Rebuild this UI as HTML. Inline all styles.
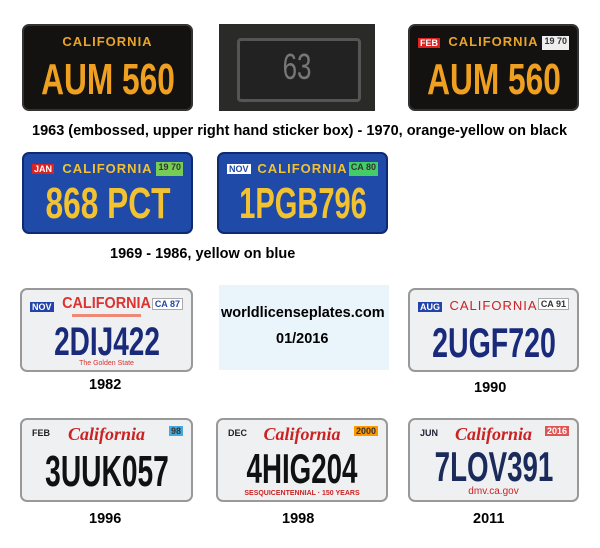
<!DOCTYPE html>
<html><head><meta charset="utf-8"><style>
body{margin:0;width:600px;height:548px;background:#fff;position:relative;font-family:"Liberation Sans",sans-serif;overflow:hidden}
.p{position:absolute;border-radius:7px;box-sizing:border-box;overflow:hidden}
.blk{background:#141210;border:2px solid #333}
.blu{background:#1f4aa8;border:2px solid #0e2a70}
.wht{background:#eef0f2;border:2px solid #999}
.t{position:absolute;left:0;right:0;text-align:center;font-weight:bold;white-space:nowrap}
.n{position:absolute;left:50%;white-space:nowrap;transform:translateX(-50%) scaleX(.72);font-family:"Liberation Sans",sans-serif;line-height:1;font-weight:bold}
.c{position:absolute;font-weight:bold;font-size:14.5px;color:#000;white-space:nowrap}
.tag{position:absolute;font-size:9px;font-weight:bold;padding:0 2px;white-space:nowrap}
</style></head><body>
<div class="p blk" style="left:22px;top:24px;width:171px;height:87px">
 <div class="t" style="top:8px;font-size:13px;color:#e8a52a;letter-spacing:1px">CALIFORNIA</div>
 <div class="n" style="top:32px;font-size:44px;color:#f0a020">AUM 560</div>
</div>
<div class="p" style="left:219px;top:24px;width:156px;height:87px;background:#2a2a28;border-radius:0">
 <div style="position:absolute;left:18px;top:14px;width:118px;height:58px;border:3px solid #555;border-radius:4px;background:#222"></div>
 <div class="n" style="top:25px;font-size:36px;color:#777;font-weight:normal">63</div>
</div>
<div class="p blk" style="left:408px;top:24px;width:171px;height:87px">
 <div class="tag" style="left:8px;top:12px;background:#d22;color:#fff">FEB</div>
 <div class="t" style="top:8px;font-size:13px;color:#e8a52a;letter-spacing:1px">CALIFORNIA</div>
 <div class="tag" style="right:8px;top:10px;background:#eee;color:#333;height:14px">19 70</div>
 <div class="n" style="top:32px;font-size:44px;color:#f0a020">AUM 560</div>
</div>
<div class="c" style="left:32px;top:123px">1963 (embossed, upper right hand sticker box) - 1970, orange-yellow on black</div>
<div class="p blu" style="left:22px;top:152px;width:171px;height:82px">
 <div class="tag" style="left:8px;top:10px;background:#d22;color:#fff">JAN</div>
 <div class="t" style="top:7px;font-size:13px;color:#f2c230;letter-spacing:1px">CALIFORNIA</div>
 <div class="tag" style="right:8px;top:8px;background:#7c5;color:#333;height:14px">19 70</div>
 <div class="n" style="top:28px;font-size:44px;color:#f2c230">868 PCT</div>
</div>
<div class="p blu" style="left:217px;top:152px;width:171px;height:82px">
 <div class="tag" style="left:8px;top:10px;background:#fff;color:#1f4aa8">NOV</div>
 <div class="t" style="top:7px;font-size:13px;color:#f2c230;letter-spacing:1px">CALIFORNIA</div>
 <div class="tag" style="right:8px;top:8px;background:#4c6;color:#333;height:14px">CA 80</div>
 <div class="n" style="top:28px;font-size:44px;color:#f2c230;transform:translateX(-50%) scaleX(.66)">1PGB796</div>
</div>
<div class="c" style="left:110px;top:246px">1969 - 1986, yellow on blue</div>
<div class="p wht" style="left:20px;top:288px;width:173px;height:84px">
 <div class="tag" style="left:8px;top:12px;background:#24a;color:#fff">NOV</div>
 <div class="t" style="top:5px;font-size:16px;color:#d33;transform:scaleX(.9)">CALIFORNIA</div>
 <div style="position:absolute;left:50px;right:50px;top:24px;height:3px;background:#e87"></div>
 <div class="tag" style="right:8px;top:8px;background:#fff;color:#24a;border:1px solid #aaa">CA 87</div>
 <div class="n" style="top:32px;font-size:40px;color:#1a2a7a;transform:translateX(-50%) scaleX(.7)">2DIJ422</div>
 <div class="t" style="bottom:3px;font-size:7px;color:#d33;font-weight:normal">The Golden State</div>
</div>
<div style="position:absolute;left:219px;top:285px;width:170px;height:85px;background:#eaf4fb"></div>
<div class="c" style="left:221px;top:305px">worldlicenseplates.com</div>
<div class="c" style="left:276px;top:331px">01/2016</div>
<div class="p wht" style="left:408px;top:288px;width:171px;height:84px">
 <div class="tag" style="left:8px;top:12px;background:#24a;color:#fff">AUG</div>
 <div class="t" style="top:8px;font-size:13px;color:#c22;letter-spacing:1px;font-weight:normal">CALIFORNIA</div>
 <div class="tag" style="right:8px;top:8px;background:#fff;color:#333;border:1px solid #aaa">CA 91</div>
 <div class="n" style="top:32px;font-size:42px;color:#1a2a7a;transform:translateX(-50%) scaleX(.68)">2UGF720</div>
</div>
<div class="c" style="left:89px;top:377px">1982</div>
<div class="c" style="left:474px;top:380px">1990</div>
<div class="p wht" style="left:20px;top:418px;width:173px;height:84px">
 <div class="tag" style="left:8px;top:8px;color:#222">FEB</div>
 <div class="t" style="top:4px;font-size:18px;color:#c22;font-style:italic;font-family:'Liberation Serif',serif">California</div>
 <div class="tag" style="right:8px;top:6px;background:#4ad;color:#333">98</div>
 <div class="n" style="top:30px;font-size:44px;color:#111;transform:translateX(-50%) scaleX(.64)">3UUK057</div>
</div>
<div class="p wht" style="left:216px;top:418px;width:172px;height:84px">
 <div class="tag" style="left:8px;top:8px;color:#222">DEC</div>
 <div class="t" style="top:4px;font-size:18px;color:#c22;font-style:italic;font-family:'Liberation Serif',serif">California</div>
 <div class="tag" style="right:8px;top:6px;background:#f90;color:#333">2000</div>
 <div class="n" style="top:28px;font-size:42px;color:#111;transform:translateX(-50%) scaleX(.66)">4HIG204</div>
 <div class="t" style="bottom:3px;font-size:7px;color:#c22">SESQUICENTENNIAL · 150 YEARS</div>
</div>
<div class="p wht" style="left:408px;top:418px;width:171px;height:84px">
 <div class="tag" style="left:8px;top:8px;color:#223">JUN</div>
 <div class="t" style="top:4px;font-size:18px;color:#c22;font-style:italic;font-family:'Liberation Serif',serif">California</div>
 <div class="tag" style="right:8px;top:6px;background:#d55;color:#fff">2016</div>
 <div class="n" style="top:26px;font-size:42px;color:#1a2a5a;transform:translateX(-50%) scaleX(.66)">7LOV391</div>
 <div class="t" style="bottom:3px;font-size:10px;color:#c22;font-weight:normal">dmv.ca.gov</div>
</div>
<div class="c" style="left:89px;top:511px">1996</div>
<div class="c" style="left:282px;top:511px">1998</div>
<div class="c" style="left:473px;top:511px">2011</div>
</body></html>
